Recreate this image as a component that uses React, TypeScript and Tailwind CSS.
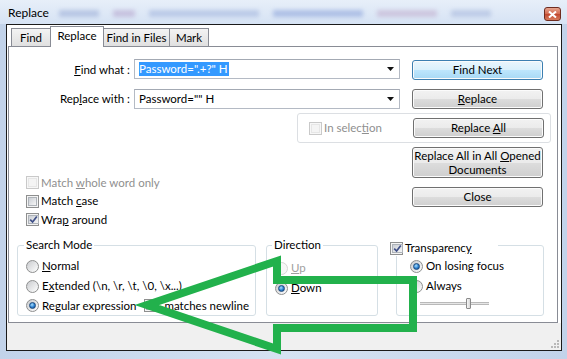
import React from 'react';

const FONT = { fontFamily: '"Segoe UI", Lato, "Noto Sans", sans-serif' };

function Check({ checked = false, disabled = false }: { checked?: boolean; disabled?: boolean }) {
  return (
    <span
      className={`w-[13px] h-[13px] shrink-0 border p-[1px] flex ${
        disabled ? 'border-[#c9c9c9] bg-[#f7f7f7]' : 'border-[#8e8f8f] bg-[#f4f4f4]'
      }`}
    >
      <span
        className={`flex-1 flex items-center justify-center border ${
          disabled
            ? 'border-[#e6e6e6] bg-[#f4f4f4]'
            : 'border-[#aeb3b9] bg-gradient-to-br from-[#cbcfd5] to-[#f6f6f6]'
        }`}
      >
        {checked && (
          <svg width="9" height="9" viewBox="0 0 9 9">
            <path d="M1.2 4.6 L3.6 7 L7.8 1.4" stroke="#3f4f87" strokeWidth="1.7" fill="none" />
          </svg>
        )}
      </span>
    </span>
  );
}

function Radio({ checked = false, disabled = false }: { checked?: boolean; disabled?: boolean }) {
  return (
    <span
      className={`w-[13px] h-[13px] shrink-0 rounded-full border flex items-center justify-center ${
        disabled
          ? 'border-[#d6d6d6] bg-[#f6f6f6]'
          : 'border-[#8e8f8f] bg-gradient-to-br from-[#c9cbce] to-[#ffffff]'
      }`}
    >
      {checked && (
        <span className="w-[7px] h-[7px] rounded-full border border-[#1d4a7d] bg-[radial-gradient(circle_at_40%_35%,#a9e0ff,#2a7fd0_55%,#0d3f7c)]" />
      )}
    </span>
  );
}

function Btn({
  children,
  primary = false,
  tall = false,
}: {
  children: React.ReactNode;
  primary?: boolean;
  tall?: boolean;
}) {
  return (
    <div
      className={`w-[131px] whitespace-nowrap ${tall ? 'h-[31px] leading-[14px]' : 'h-[20px] leading-[16px]'} rounded-[3px] border flex items-center justify-center text-center shadow-[inset_0_0_0_1px_#fbfbfb] ${
        primary
          ? 'border-[#3c7fb1] bg-[linear-gradient(#eaf6fd_0%,#d9f0fc_50%,#bee6fd_50%,#a7d9f5_100%)]'
          : 'border-[#707070] bg-[linear-gradient(#f2f2f2_0%,#ebebeb_50%,#dddddd_50%,#cfcfcf_100%)]'
      }`}
    >
      <span>{children}</span>
    </div>
  );
}

function Combo({ text, selected = false }: { text: string; selected?: boolean }) {
  return (
    <div className="h-[20px] border border-[#b4bac4] border-t-[#a3a9b3] bg-white flex items-center pl-[4px] pr-[5px] whitespace-nowrap">
      <span className={selected ? 'bg-[#3399ff] text-white leading-[14px] pr-[1px]' : 'leading-[14px]'}>{text}</span>
      <svg className="ml-auto" width="7" height="4" viewBox="0 0 7 4">
        <path d="M0 0 H7 L3.5 4 Z" fill="#111" />
      </svg>
    </div>
  );
}

function Tab({ label, active = false, w }: { label: string; active?: boolean; w: string }) {
  return (
    <div
      className={`${w} -ml-[1px] first:ml-0 whitespace-nowrap border border-b-0 border-[#898c95] flex items-center justify-center ${
        active
          ? 'h-[21px] -mb-[1px] bg-white relative z-10 pb-[2px]'
          : 'h-[18px] bg-[linear-gradient(#f3f3f3,#e0e0e0)]'
      }`}
    >
      {label}
    </div>
  );
}

export default function App() {
  return (
    <div className="relative w-[567px] h-[359px] overflow-hidden bg-[linear-gradient(90deg,#c2d3ea,#d5e2f2_50%,#c2d3ea)] text-[11.5px] text-black whitespace-nowrap" style={FONT}>
      {/* title bar (glass) */}
      <div className="h-[24px] flex items-start pl-[8px] pr-[6px] bg-[linear-gradient(#e7eff9,#d6e3f4)]">
        <span className="mt-[5px] leading-[16px] text-[12px]">Replace</span>
        <div className="flex-1 mt-[10px] ml-[10px] mr-[12px] h-[7px] flex gap-[14px] opacity-60 blur-[2px]">
          <span className="w-[40px] bg-[#9fb0d8]" />
          <span className="w-[22px] bg-[#b7a8cf]" />
          <span className="w-[110px] bg-[#a4b6de]" />
          <span className="w-[90px] bg-[#8fa6db]" />
          <span className="w-[60px] bg-[#c2b0cf]" />
          <span className="w-[40px] bg-[#a9b9dd]" />
        </div>
        <div className="mt-[7px] w-[17px] h-[14px] rounded-[3px] border border-[#6e2c20] bg-[linear-gradient(#e6a58f,#d2694f_50%,#c0462e_50%,#d77b5c)] flex items-center justify-center">
          <svg width="9" height="7" viewBox="0 0 9 7">
            <path d="M1 0.5 L8 6.5 M8 0.5 L1 6.5" stroke="#fff" strokeWidth="2" />
          </svg>
        </div>
      </div>

      {/* client area */}
      <div className="ml-[6px] w-[556px] h-[327px] border border-[#1a1a1a] bg-white flex flex-col">
        <div className="h-[21px] flex items-end pl-[4px]">
          <Tab label="Find" w="w-[40px]" />
          <Tab label="Replace" w="w-[54px]" active />
          <Tab label="Find in Files" w="w-[67px]" />
          <Tab label="Mark" w="w-[40px]" />
        </div>

        <div className="ml-[1px] w-[550px] h-[277px] border border-[#898c95] bg-white flex flex-col">
          {/* find / replace fields */}
          <div className="mt-[12px] flex">
            <div className="grid grid-cols-[121px_266px] gap-x-[4px] gap-y-[9px] items-center">
              <span className="text-right">
                <u>F</u>ind what :
              </span>
              <Combo text={'Password=".+?" H'} selected />
              <span className="text-right">
                Rep<u>l</u>ace with :
              </span>
              <Combo text={'Password="" H'} />
            </div>
            <div className="ml-[12px] mt-[1px] flex flex-col gap-[9px]">
              <Btn primary>Find Next</Btn>
              <Btn>
                <u>R</u>eplace
              </Btn>
            </div>
          </div>

          {/* in selection */}
          <div className="mt-[4px] ml-[288px] w-[254px] h-[30px] border border-[#dcdfe3] rounded-[3px] flex items-center justify-between pl-[11px] pr-[6px]">
            <span className="flex items-center gap-[2px] text-[#8f8f8f]">
              <Check disabled />
              <span>
                In selec<u>t</u>ion
              </span>
            </span>
            <Btn>
              Replace <u>A</u>ll
            </Btn>
          </div>

          {/* options + buttons */}
          <div className="mt-[4px] flex">
            <div className="w-[403px] pl-[17px] pt-[26px] flex flex-col">
              <div className="h-[19px] flex items-center gap-[2px] text-[#8f8f8f]">
                <Check disabled />
                <span>
                  Match <u>w</u>hole word only
                </span>
              </div>
              <div className="h-[18px] flex items-center gap-[2px]">
                <Check />
                <span>
                  Match <u>c</u>ase
                </span>
              </div>
              <div className="h-[19px] flex items-center gap-[2px]">
                <Check checked />
                <span>
                  Wra<u>p</u> around
                </span>
              </div>
            </div>
            <div className="flex flex-col gap-[9px]">
              <Btn tall>
                Replace All in All <u>O</u>pened
                <br />
                Documents
              </Btn>
              <Btn>Close</Btn>
            </div>
          </div>

          {/* group boxes */}
          <div className="mt-[8px] flex items-start">
            <fieldset className="ml-[8px] w-[239px] min-w-0 h-[79px] border border-[#d5dfe5] rounded-[3px] overflow-hidden">
              <legend className="ml-[6px] px-[2px] leading-[16px]">Search Mode</legend>
              <div className="mt-[3px] pl-[8px] pr-[6px] flex flex-col">
                <div className="h-[20px] flex items-center gap-[3px]">
                  <Radio />
                  <span>
                    <u>N</u>ormal
                  </span>
                </div>
                <div className="h-[20px] flex items-center gap-[3px]">
                  <Radio />
                  <span>
                    E<u>x</u>tended (\n, \r, \t, \0, \x...)
                  </span>
                </div>
                <div className="h-[19px] flex items-center gap-[3px]">
                  <Radio checked />
                  <span>
                    Re<u>g</u>ular expression
                  </span>
                  <span className="ml-auto flex items-center gap-[2px]">
                    <Check />
                    <span>. matches newline</span>
                  </span>
                </div>
              </div>
            </fieldset>

            <fieldset className="ml-[10px] w-[112px] min-w-0 h-[79px] border border-[#d5dfe5] rounded-[3px]">
              <legend className="ml-[5px] px-[2px] leading-[16px]">Direction</legend>
              <div className="mt-[5px] pl-[8px] flex flex-col">
                <div className="h-[20px] flex items-center gap-[3px] text-[#a0a0a0]">
                  <Radio disabled />
                  <span>
                    <u>U</u>p
                  </span>
                </div>
                <div className="h-[20px] flex items-center gap-[3px]">
                  <Radio checked />
                  <span>
                    <u>D</u>own
                  </span>
                </div>
              </div>
            </fieldset>

            <fieldset className="ml-[18px] -mt-[3px] w-[148px] min-w-0 h-[82px] border border-[#d5dfe5] rounded-[3px]">
              <legend className="-ml-[7px] pt-[6px] pr-[26px] bg-white">
                <span className="flex items-center gap-[2px] leading-[16px]">
                  <Check checked />
                  <span>
                    Transparenc<u>y</u>
                  </span>
                </span>
              </legend>
              <div className="pl-[13px] flex flex-col">
                <div className="h-[20px] flex items-center gap-[3px]">
                  <Radio checked />
                  <span>On losing focus</span>
                </div>
                <div className="h-[20px] flex items-center gap-[3px]">
                  <Radio />
                  <span>Always</span>
                </div>
                <div className="ml-[10px] h-[14px] flex items-center">
                  <span className="w-[46px] h-[3px] border-y border-[#b9b9b9] bg-[#e6e6e6]" />
                  <span className="w-[5px] h-[11px] rounded-[1px] border border-[#8a8a8a] bg-[linear-gradient(90deg,#f6f6f6,#d8d8d8)]" />
                  <span className="w-[18px] h-[3px] border-y border-[#b9b9b9] bg-[#e6e6e6]" />
                </div>
              </div>
            </fieldset>
          </div>
        </div>

        {/* bottom strip */}
        <div className="flex-1 bg-[#f0f0f0] flex items-end justify-end pr-[2px] pb-[2px]">
          <svg width="10" height="10" viewBox="0 0 10 10">
            <g fill="#b8b8b8">
              <rect x="8" y="2" width="2" height="2" />
              <rect x="5" y="5" width="2" height="2" />
              <rect x="8" y="5" width="2" height="2" />
              <rect x="2" y="8" width="2" height="2" />
              <rect x="5" y="8" width="2" height="2" />
              <rect x="8" y="8" width="2" height="2" />
            </g>
          </svg>
        </div>
      </div>

      {/* green annotation arrow */}
      <svg className="absolute left-0 top-0 pointer-events-none" width="567" height="359" viewBox="0 0 567 359">
        <polygon
          points="147,305 277,261 277,280 413,280 413,328 277,328 277,349"
          fill="none"
          stroke="#22b14c"
          strokeWidth="8"
          strokeLinejoin="miter"
          strokeMiterlimit="10"
        />
      </svg>
    </div>
  );
}
